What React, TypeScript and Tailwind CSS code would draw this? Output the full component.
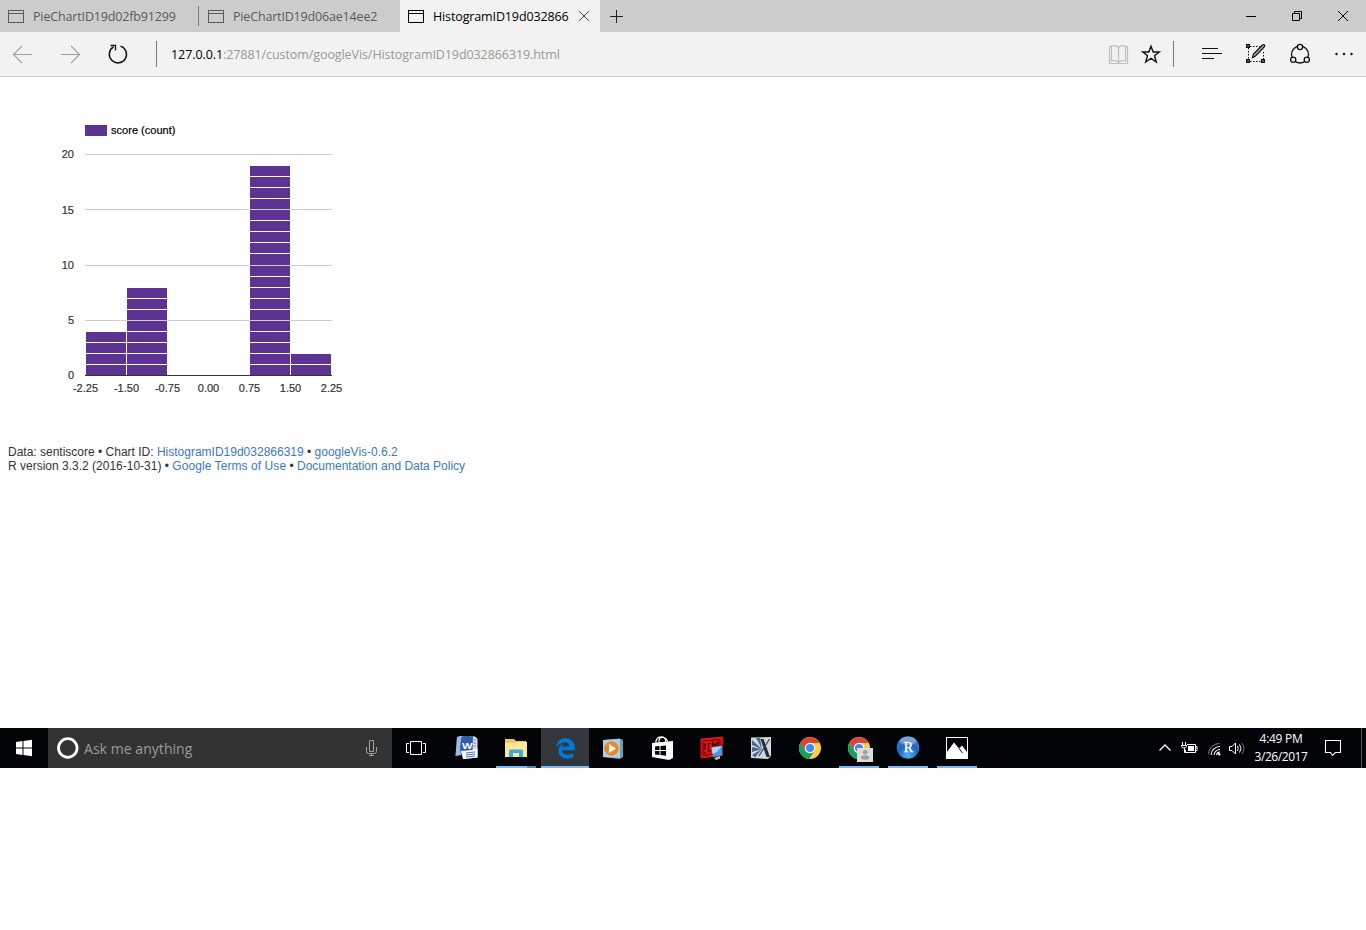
import type { ReactNode } from 'react';
import { FaEdgeLegacy } from 'react-icons/fa';

const UI = "font-['Open_Sans','Noto_Sans',sans-serif]";

function WindowIcon() {
  return (
    <svg width="16" height="13" viewBox="0 0 16 13" className="shrink-0" fill="none" stroke="currentColor" shapeRendering="crispEdges">
      <rect x="0.5" y="0.5" width="15" height="12" />
      <path d="M0 3.5H16" />
    </svg>
  );
}

function TabStrip() {
  return (
    <div className="flex h-8 bg-[#cccccc] text-[12.5px] text-[#5a5a5a]">
      <div className="flex w-[199px] items-center pl-2">
        <WindowIcon />
        <span className="ml-[9px] whitespace-nowrap pt-[3px] tracking-[-0.15px]">PieChartID19d02fb91299</span>
        <div className="ml-auto h-5 w-px bg-[#7b7b7b]" />
      </div>
      <div className="flex w-[201px] items-center pl-[9px]">
        <WindowIcon />
        <span className="ml-[9px] whitespace-nowrap pt-[3px] tracking-[-0.17px]">PieChartID19d06ae14ee2</span>
      </div>
      <div className="flex w-[200px] items-center bg-[#f2f2f2] pl-2 text-black">
        <WindowIcon />
        <span className="ml-[9px] w-[136px] whitespace-nowrap pt-[3px] tracking-[-0.13px]">HistogramID19d032866</span>
        <svg width="12" height="12" viewBox="0 0 12 12" className="ml-[9px] shrink-0" fill="none" stroke="#444">
          <path d="M1 1L11 11M11 1L1 11" />
        </svg>
      </div>
      <div className="flex items-center pl-[10px]">
        <svg width="13" height="13" viewBox="0 0 13 13" fill="none" stroke="#222" shapeRendering="crispEdges">
          <path d="M6.5 0V13M0 6.5H13" />
        </svg>
      </div>
      <svg width="138" height="32" viewBox="0 0 138 32" className="ml-auto" fill="none" stroke="#000">
        <path d="M18 16.5H28" />
        <path d="M64.500 13.500H71.500V20.500H64.500ZM66.500 13.500V11.500H73.500V18.500H71.500" />
        <path d="M110 11L120 21M120 11L110 21" />
      </svg>
    </div>
  );
}

function Toolbar() {
  return (
    <div className="flex h-[45px] border-b border-[#cccccc] bg-[#f2f2f2]">
      <svg width="171" height="44" viewBox="0 0 171 44" fill="none">
        <path d="M13.500 22.500H32M22 14L13.500 22.500L22 31M61 22.500H79.500M71 14L79.500 22.500L71 31" stroke="#a0a0a0" strokeWidth="1.100" />
        <path d="M120.500 14.100A8.600 8.600 0 1 1 113.500 14.900" stroke="#111" strokeWidth="1.500" />
        <path d="M110.500 13.500H115.500V18.500" stroke="#111" strokeWidth="1.300" />
        <path d="M156.500 9V35" stroke="#777" />
      </svg>
      <div className="flex items-center whitespace-nowrap pt-[3px] text-[12.5px] tracking-[-0.08px] text-[#999]">
        <span className="text-black">127.0.0.1</span>
        <span>:27881/custom/googleVis/HistogramID19d032866319.html</span>
      </div>
      <svg width="266" height="44" viewBox="0 0 266 44" className="ml-auto" fill="none" stroke="#111">
        <g stroke="#bfbfbf" strokeWidth="1.200">
          <path d="M12 14.500H9.500V31.500H27.500V14.500H25" />
          <path d="M18.500 15.500C17 13.700 14 13.500 11.500 14V29C14 28.500 17 28.500 18.500 30.500C20 28.500 23 28.500 25.500 29V14C23 13.500 20 13.700 18.500 15.500V31" />
        </g>
        <path d="M51 14.300L53.200 20H59.200L54.500 23.700L56.300 30L51 26.300L45.700 30L47.500 23.700L42.800 20H48.800Z" strokeWidth="1.400" />
        <path d="M73.500 9V35" stroke="#777" />
        <path d="M102 16.500H118M102 21.500H122M102 26.500H114" strokeWidth="1.200" />
        <g>
          <path d="M150 14.500H161M148.500 16V28M150 29.500H163M163.500 20V28" strokeDasharray="1.500 1.500" />
          <rect x="146.500" y="12.500" width="3" height="3" fill="#555" />
          <rect x="146.500" y="27.500" width="3" height="3" fill="#555" />
          <rect x="161.500" y="27.500" width="3" height="3" fill="#555" />
          <path d="M152.500 25.500L153.500 22L162.500 13C164 11.800 165.500 13.500 164.300 14.800L155.500 24Z" fill="#aaa" strokeWidth="1.200" />
        </g>
        <circle cx="200" cy="22.500" r="8.500" strokeWidth="1.300" />
        <g fill="#f2f2f2" strokeWidth="1.300">
          <circle cx="200" cy="15" r="2.600" />
          <circle cx="193.200" cy="27.800" r="2.600" />
          <circle cx="206.800" cy="27.800" r="2.600" />
        </g>
        <g fill="#111" stroke="none">
          <circle cx="236.500" cy="22" r="1.200" />
          <circle cx="244" cy="22" r="1.200" />
          <circle cx="251.500" cy="22" r="1.200" />
        </g>
      </svg>
    </div>
  );
}

const levels = [375, 364, 353, 342, 331, 320, 309, 298, 287, 276, 265, 253, 242, 231, 220, 209, 198, 187, 176, 165];
const bins = [
  { x: 86, count: 4 },
  { x: 127, count: 8 },
  { x: 250, count: 19 },
  { x: 291, count: 2 },
];
const gridLines = [
  { y: 154, baseline: 158, label: '20' },
  { y: 209, baseline: 214, label: '15' },
  { y: 265, baseline: 269, label: '10' },
  { y: 320, baseline: 324, label: '5' },
];
const ticks = ['-2.25', '-1.50', '-0.75', '0.00', '0.75', '1.50', '2.25'];

function Histogram() {
  return (
    <svg width="400" height="323" viewBox="0 77 400 323" className="block font-['Liberation_Sans',Arial,sans-serif] text-[11px]" shapeRendering="crispEdges">
      <rect x="85" y="125" width="22" height="11" fill="#5c3292" />
      <text x="111" y="134" fill="#000" stroke="#000" strokeWidth="0.200" textLength="64.500">score (count)</text>
      {bins.map((b) =>
        levels.slice(0, b.count).map((y, i) => (
          <rect key={`${b.x}-${i}`} x={b.x} y={levels[i + 1] + 1} width="40" height={y - levels[i + 1] - 1} fill="#5c3292" />
        )),
      )}
      {gridLines.map((g) => (
        <g key={g.label}>
          <rect x="85" y={g.y} width="247" height="1" fill="#cccccc" />
          <text x="74" y={g.baseline} textAnchor="end" fill="#333" stroke="#333" strokeWidth="0.200">{g.label}</text>
        </g>
      ))}
      <rect x="85" y="375" width="247" height="1" fill="#333" />
      <text x="74" y="379" textAnchor="end" fill="#333" stroke="#333" strokeWidth="0.200">0</text>
      {ticks.map((t, i) => (
        <text key={t} x={85.5 + i * 41} y="392" textAnchor="middle" fill="#333" stroke="#333" strokeWidth="0.200">{t}</text>
      ))}
    </svg>
  );
}

function Slot({ children, line = false }: { children: ReactNode; line?: boolean }) {
  return (
    <svg width="49" height="40" viewBox="0 0 49 40" className="shrink-0">
      {children}
      {line && <rect x="5" y="38" width="40" height="2" fill="#76b9f7" />}
    </svg>
  );
}

function ChromeLogo() {
  return (
    <g>
      <circle cx="25" cy="20" r="11" fill="#ffcd42" />
      <path d="M25 9A11 11 0 0 1 34.700 15H25L20 22.500L15.400 14.600A11 11 0 0 1 25 9Z" fill="#db4437" />
      <path d="M15.400 14.600L20.600 23.200L29 23.500L24.200 31A11 11 0 0 1 15.400 14.600Z" fill="#16a05d" />
      <circle cx="25" cy="20" r="5.200" fill="#fff" />
      <circle cx="25" cy="20" r="4.100" fill="#4687f4" />
    </g>
  );
}

function Taskbar() {
  return (
    <div className="flex h-10 bg-[#020408] text-white">
      <svg width="48" height="40" viewBox="0 0 48 40" className="shrink-0" fill="#fff">
        <path d="M16 14L22.500 13V19.500H16ZM23.500 12.900L32 11.800V19.500H23.500ZM16 20.500H22.500V27L16 26.100ZM23.500 20.500H32V28.200L23.500 27.100Z" />
      </svg>
      <div className="flex w-[344px] shrink-0 items-center bg-[#333333]">
        <svg width="36" height="40" viewBox="0 0 36 40" fill="none">
          <circle cx="19.800" cy="20" r="9.300" stroke="#fff" strokeWidth="2.700" />
        </svg>
        <span className="whitespace-nowrap text-[14px] tracking-[0.05px] text-[#9b9b9b]">Ask me anything</span>
        <svg width="36" height="40" viewBox="0 0 36 40" className="ml-auto" fill="none" stroke="#a0a0a0">
          <path d="M13.500 12.500H17.500V23.500H13.500Z" />
          <path d="M10.500 19V23.500Q10.500 25.500 12.500 25.500H18.500Q20.500 25.500 20.500 23.500V19M15.500 25.500V27.500M13 27.500H18" />
        </svg>
      </div>
      <svg width="50" height="40" viewBox="0 0 50 40" className="shrink-0" fill="none" stroke="#fff">
        <path d="M18.500 13.500H29.500V26.500H18.500ZM17 15.500H14.500V24.500H17M31 15.500H33.500V24.500H31" />
      </svg>
      <Slot>
        <path d="M17 8L33 8.500L35.500 11V29.500L22 31Z" fill="#dbe5f6" />
        <path d="M15 9Q23 7.500 31 8.500L30.500 25L13.500 28Z" fill="#315ca8" />
        <path d="M15 9Q18 8 20 8Q17 18 19 27L13.500 28Z" fill="#9db9e6" />
        <path d="M19 23L30 22L35.500 20.500V29.500L21 31Z" fill="#f5f8ff" />
        <path d="M24 25L33 24M24 27L33 26M24 29L33 28M31.500 12H34M31.500 15H34M31.500 18H34" stroke="#5576b5" />
        <text x="20" y="21" fontSize="9.5" fontWeight="700" textLength="10.5" lengthAdjust="spacingAndGlyphs" fill="#fff" className="font-['Liberation_Sans',sans-serif]">W</text>
      </Slot>
      <Slot>
        <path d="M14 11H23L25 13H35V29H14Z" fill="#edc65f" />
        <path d="M14 15H24L26 14H36V29H14Z" fill="#ffe796" />
        <path d="M18 29V23Q18 21.500 19.500 21.500H30.500Q32 21.500 32 23V29H28V25H22V29Z" fill="#36aee0" />
        <rect x="5" y="38" width="31" height="2" fill="#76b9f7" />
        <rect x="36" y="38" width="9" height="2" fill="#5086b4" />
      </Slot>
      <div className="flex w-[49px] shrink-0 flex-col items-end">
        <div className="flex h-[38px] w-12 items-center justify-center bg-[#33373b] pt-[2px]">
          <FaEdgeLegacy className="size-[21px] text-[#0078d7]" />
        </div>
        <div className="h-[2px] w-12 bg-[#76b9f7]" />
      </div>
      <Slot>
        <path d="M14 12L31 10.500L34 12V29L31 31L14 29Z" fill="#6f9eb2" />
        <path d="M14 12L31 11V30L14 29Z" fill="#a8d3e6" />
        <circle cx="22.500" cy="20.500" r="7.200" fill="#f08423" />
        <path d="M20 16L27 20.500L20 25Z" fill="#fff" />
      </Slot>
      <Slot>
        <path d="M14 15L35 13V30L31 32L14 29Z" fill="#fff" />
        <path d="M18 16V13Q19 9 23 8.800Q27 8.500 27.500 12V15M21 15V12Q22 9 25 9.500Q29 10 29.500 14" fill="none" stroke="#fff" strokeWidth="1.200" />
        <path d="M17 18.500L21.500 18V22H17ZM22.500 17.900L28 17.400V22H22.500ZM17 23H21.500V27L17 26.500ZM22.500 23H28V27.700L22.500 27.100Z" fill="#020408" />
      </Slot>
      <Slot>
        <path d="M13.500 10.500L36 8.500L35.500 28L13.500 30.500Z" fill="#dc1215" />
        <path d="M16 13L33 11.500V25L16 27.500Z" fill="none" stroke="#6b0508" />
        <path d="M18 15.500V22M18 24V25.500M21.500 23V15.500H24M21.500 23H24M25.500 22V14.500L28 17.500L31 14V19" fill="none" stroke="#360103" strokeWidth="1.200" />
        <path d="M24.500 19.500L35 18L35.500 27L26 29Z" fill="#4496e0" />
        <path d="M24.500 19.500L35 18L30 24L25.500 26Z" fill="#a5d5fa" />
        <path d="M27 30L33 28V30.500L29 32Z" fill="#bfc3c8" />
      </Slot>
      <Slot>
        <path d="M15 9.500L35 9V28L32 31L15 30Z" fill="#d0d8e0" />
        <path d="M16 12L26 21L16 17ZM16 19L26 21L16 24ZM16 27L26 21L19 29.500ZM20 10L26 21L24 10Z" fill="#49688e" />
        <path d="M24.500 11H27.500L34 29H30.500Z" fill="#222a36" />
        <path d="M33.500 11L23 28" stroke="#34445a" strokeWidth="1.200" />
      </Slot>
      <Slot><ChromeLogo /></Slot>
      <Slot line>
        <ChromeLogo />
        <rect x="23" y="20" width="16" height="14" fill="#dcdcdc" />
        <circle cx="31.200" cy="24.300" r="2.300" fill="#9e9e9e" />
        <ellipse cx="31.200" cy="29.500" rx="4.200" ry="2.200" fill="#9e9e9e" />
      </Slot>
      <Slot line>
        <defs>
          <radialGradient id="r-ball" cx="0.500" cy="0.850" r="0.800">
            <stop offset="0" stopColor="#55b5f4" />
            <stop offset="0.550" stopColor="#1d66c2" />
            <stop offset="1" stopColor="#4b7fc5" />
          </radialGradient>
        </defs>
        <circle cx="25" cy="19.500" r="11.300" fill="url(#r-ball)" />
        <ellipse cx="25" cy="13" rx="8" ry="4.300" fill="#fff" opacity="0.300" />
        <text x="25.500" y="23.700" fontSize="14" textAnchor="middle" fill="#fff" stroke="#fff" strokeWidth="0.400" className="font-['Liberation_Serif',serif]">R</text>
      </Slot>
      <Slot line>
        <rect x="14.500" y="9.500" width="21" height="21" fill="#020408" stroke="#fff" />
        <path d="M15 24L22 14.500L27 20.500L30 17.500L35 24V30H15Z" fill="#fff" />
        <path d="M27 20.500L30.500 25" stroke="#020408" />
      </Slot>
      <div className="ml-auto flex shrink-0">
        <svg width="100" height="40" viewBox="0 0 100 40" fill="none" stroke="#fff">
          <path d="M13.500 22.500L19 17L24.500 22.500" strokeWidth="1.300" />
          <path d="M41 16.500H49.500V24.500H39.500V22M49.500 18.500H51V22.500H49.500" />
          <rect x="42" y="18" width="6" height="5" fill="#fff" stroke="none" />
          <path d="M36.500 14V17M39.500 14V17M35 17.500H41M35.500 17.500V18.500Q36 20 38 20Q40 20 40.500 18.500V17.500M38.500 20V24.500H40" />
          <path d="M62.500 26A11 11 0 0 1 73.500 15.500" stroke="#888" />
          <path d="M65 27A9 9 0 0 1 74 18.500M68 27A6 6 0 0 1 74 21.500M70.500 27A3.500 3.500 0 0 1 74 24" strokeWidth="1.100" />
          <circle cx="73.200" cy="26.300" r="1.200" fill="#fff" stroke="none" />
          <path d="M83.500 18.500H86L89.500 15V26L86 22.500H83.500ZM91.500 18Q93 20.500 91.500 23" />
          <path d="M93.500 16.500Q96.500 20.500 93.500 24.500" />
          <path d="M96 15Q100 20.500 96 26" stroke="#777" />
        </svg>
        <div className="flex w-[70px] flex-col items-center pt-[2px] text-[12px] leading-[18px]">
          <span className="whitespace-nowrap tracking-[-0.300px]">4:49 PM</span>
          <span className="whitespace-nowrap tracking-[-0.430px]">3/26/2017</span>
        </div>
        <svg width="50" height="40" viewBox="0 0 50 40" fill="none">
          <path d="M9.500 12.500H24.500V24.500H19.500L16.500 27.500L14.500 24.500H9.500Z" stroke="#fff" strokeWidth="1.100" />
          <path d="M45.500 0V40" stroke="#555" />
        </svg>
      </div>
    </div>
  );
}

export default function App() {
  return (
    <div className={`${UI} flex h-[930px] w-[1366px] flex-col overflow-hidden bg-white`}>
      <TabStrip />
      <Toolbar />
      <main className="flex-1">
        <Histogram />
        <div className="mt-[45px] pl-2 font-['Liberation_Sans',Arial,sans-serif] text-[12px] leading-[14px] text-[#333]">
          <p>Data: sentiscore • Chart ID: <a className="text-[#4078c0]">HistogramID19d032866319</a> • <a className="text-[#4078c0]">googleVis-0.6.2</a></p>
          <p>R version 3.3.2 (2016-10-31) • <a className="tracking-[0.07px] text-[#4078c0]">Google Terms of Use</a> • <a className="text-[#4078c0]">Documentation and Data Policy</a></p>
        </div>
      </main>
      <Taskbar />
      <div className="h-[162px] bg-white" />
    </div>
  );
}
